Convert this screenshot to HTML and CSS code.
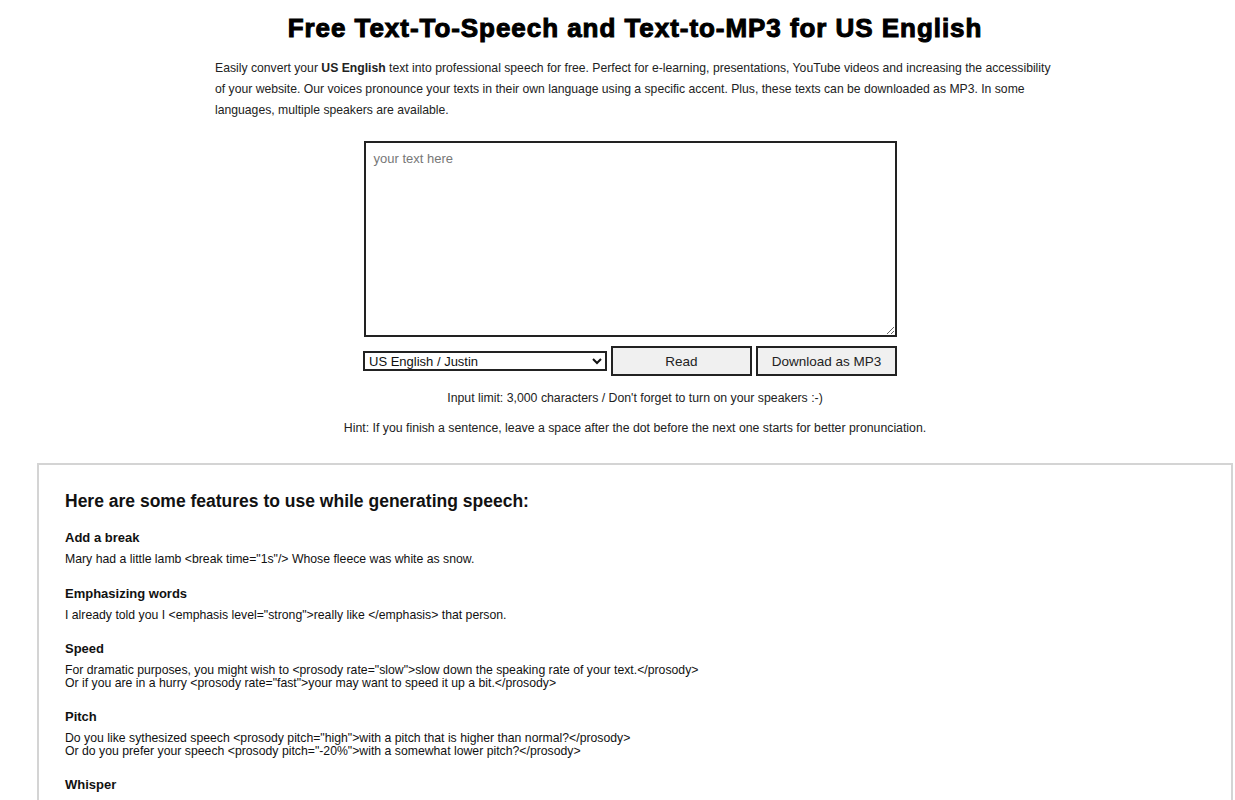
FILE: index.html
```html
<!DOCTYPE html>
<html lang="en">
<head>
    <meta charset="UTF-8">
    <meta name="viewport" content="width=device-width, initial-scale=1.0">
    <title>Free Text-To-Speech and Text-to-MP3 for US English</title>
    <link rel="stylesheet" href="styles.css">
</head>
<body>
    <div class="main">
        <h1 class="title">Free Text-To-Speech and Text-to-MP3 for US English</h1>
        <p class="intro">Easily convert your <b>US English</b> text into professional speech for free. Perfect for e-learning, presentations, YouTube videos and increasing the accessibility of your website. Our voices pronounce your texts in their own language using a specific accent. Plus, these texts can be downloaded as MP3. In some languages, multiple speakers are available.</p>

        <div class="tts">
            <textarea class="tts-text" placeholder="your text here"></textarea>
            <div class="tts-controls">
                <select class="tts-voice">
                    <option>US English / Justin</option>
                    <option>US English / Joanna</option>
                    <option>US English / Matthew</option>
                </select>
                <button class="tts-btn tts-read">Read</button>
                <button class="tts-btn tts-download">Download as MP3</button>
            </div>
        </div>

        <p class="note">Input limit: 3,000 characters / Don't forget to turn on your speakers :-)</p>
        <p class="note">Hint: If you finish a sentence, leave a space after the dot before the next one starts for better pronunciation.</p>
    </div>

    <div class="features">
        <h2 class="features-title">Here are some features to use while generating speech:</h2>

        <div class="feature">
            <h3 class="feature-name">Add a break</h3>
            <p class="feature-text">Mary had a little lamb &lt;break time="1s"/&gt; Whose fleece was white as snow.</p>
        </div>
        <div class="feature">
            <h3 class="feature-name">Emphasizing words</h3>
            <p class="feature-text">I already told you I &lt;emphasis level="strong"&gt;really like &lt;/emphasis&gt; that person.</p>
        </div>
        <div class="feature">
            <h3 class="feature-name">Speed</h3>
            <p class="feature-text">For dramatic purposes, you might wish to &lt;prosody rate="slow"&gt;slow down the speaking rate of your text.&lt;/prosody&gt;<br>Or if you are in a hurry &lt;prosody rate="fast"&gt;your may want to speed it up a bit.&lt;/prosody&gt;</p>
        </div>
        <div class="feature">
            <h3 class="feature-name">Pitch</h3>
            <p class="feature-text">Do you like sythesized speech &lt;prosody pitch="high"&gt;with a pitch that is higher than normal?&lt;/prosody&gt;<br>Or do you prefer your speech &lt;prosody pitch="-20%"&gt;with a somewhat lower pitch?&lt;/prosody&gt;</p>
        </div>
        <div class="feature">
            <h3 class="feature-name">Whisper</h3>
            <p class="feature-text">&lt;amazon:effect name="whispered"&gt;If you make any noise, &lt;/amazon:effect&gt; she said, &lt;amazon:effect name="whispered"&gt;they will hear us.&lt;/amazon:effect&gt;</p>
        </div>
    </div>
</body>
</html>
```

FILE: styles.css
```css
body {
    margin: 0;
    font-family: "Liberation Sans", Arial, Helvetica, sans-serif;
    color: #111;
    background: #fff;
}
.main {
    width: 840px;
    margin-left: 215px;
    padding-top: 12px;
}
.title {
    margin: 0;
    text-align: center;
    font-size: 26px;
    line-height: 32px;
    font-weight: bold;
    letter-spacing: 0.95px;
    -webkit-text-stroke: 1px #000;
    color: #000;
}
.intro {
    width: 842px;
    margin: 14px 0 0;
    font-size: 12.2px;
    line-height: 21px;
    color: #222;
}
.tts {
    display: flex;
    flex-direction: column;
    align-items: center;
    margin-top: 20px;
    padding-right: 10px;
}
.tts-text {
    box-sizing: border-box;
    width: 533px;
    height: 196px;
    margin: 0;
    padding: 8px;
    border: 2px solid #222;
    font-family: "Liberation Sans", Arial, sans-serif;
    font-size: 13px;
    resize: vertical;
}
.tts-text::placeholder {
    color: #777;
}
.tts-controls {
    display: flex;
    align-items: center;
    gap: 4px;
    margin-top: 9px;
}
.tts-voice {
    box-sizing: border-box;
    width: 244px;
    height: 20px;
    margin: 0;
    border: 2px solid #222;
    border-radius: 0;
    background: #fff;
    font-family: "Liberation Sans", Arial, sans-serif;
    font-size: 13px;
    color: #111;
}
.tts-btn {
    box-sizing: border-box;
    height: 30px;
    margin: 0;
    border: 2px solid #222;
    background: #f0f0f0;
    font-family: "Liberation Sans", Arial, sans-serif;
    font-size: 13.5px;
    color: #222;
}
.tts-read {
    width: 141px;
}
.tts-download {
    width: 141px;
}
.note {
    margin: 0;
    text-align: center;
    font-size: 12.3px;
    line-height: 16px;
    color: #222;
}
.tts + .note {
    margin-top: 14px;
}
.note + .note {
    margin-top: 14px;
}
.features {
    box-sizing: border-box;
    width: 1196px;
    margin: 27px 0 0 37px;
    padding: 24px 26px 20px;
    border: 2px solid #d4d4d4;
}
.features-title {
    margin: 0;
    font-size: 17.5px;
    line-height: 24px;
    color: #111;
}
.feature {
    margin-top: 17px;
}
.feature + .feature {
    margin-top: 20px;
}
.feature-name {
    margin: 0;
    font-size: 13px;
    line-height: 16px;
    color: #111;
}
.feature-text {
    margin: 7px 0 0;
    font-size: 12.25px;
    line-height: 12.5px;
    color: #111;
}
```
